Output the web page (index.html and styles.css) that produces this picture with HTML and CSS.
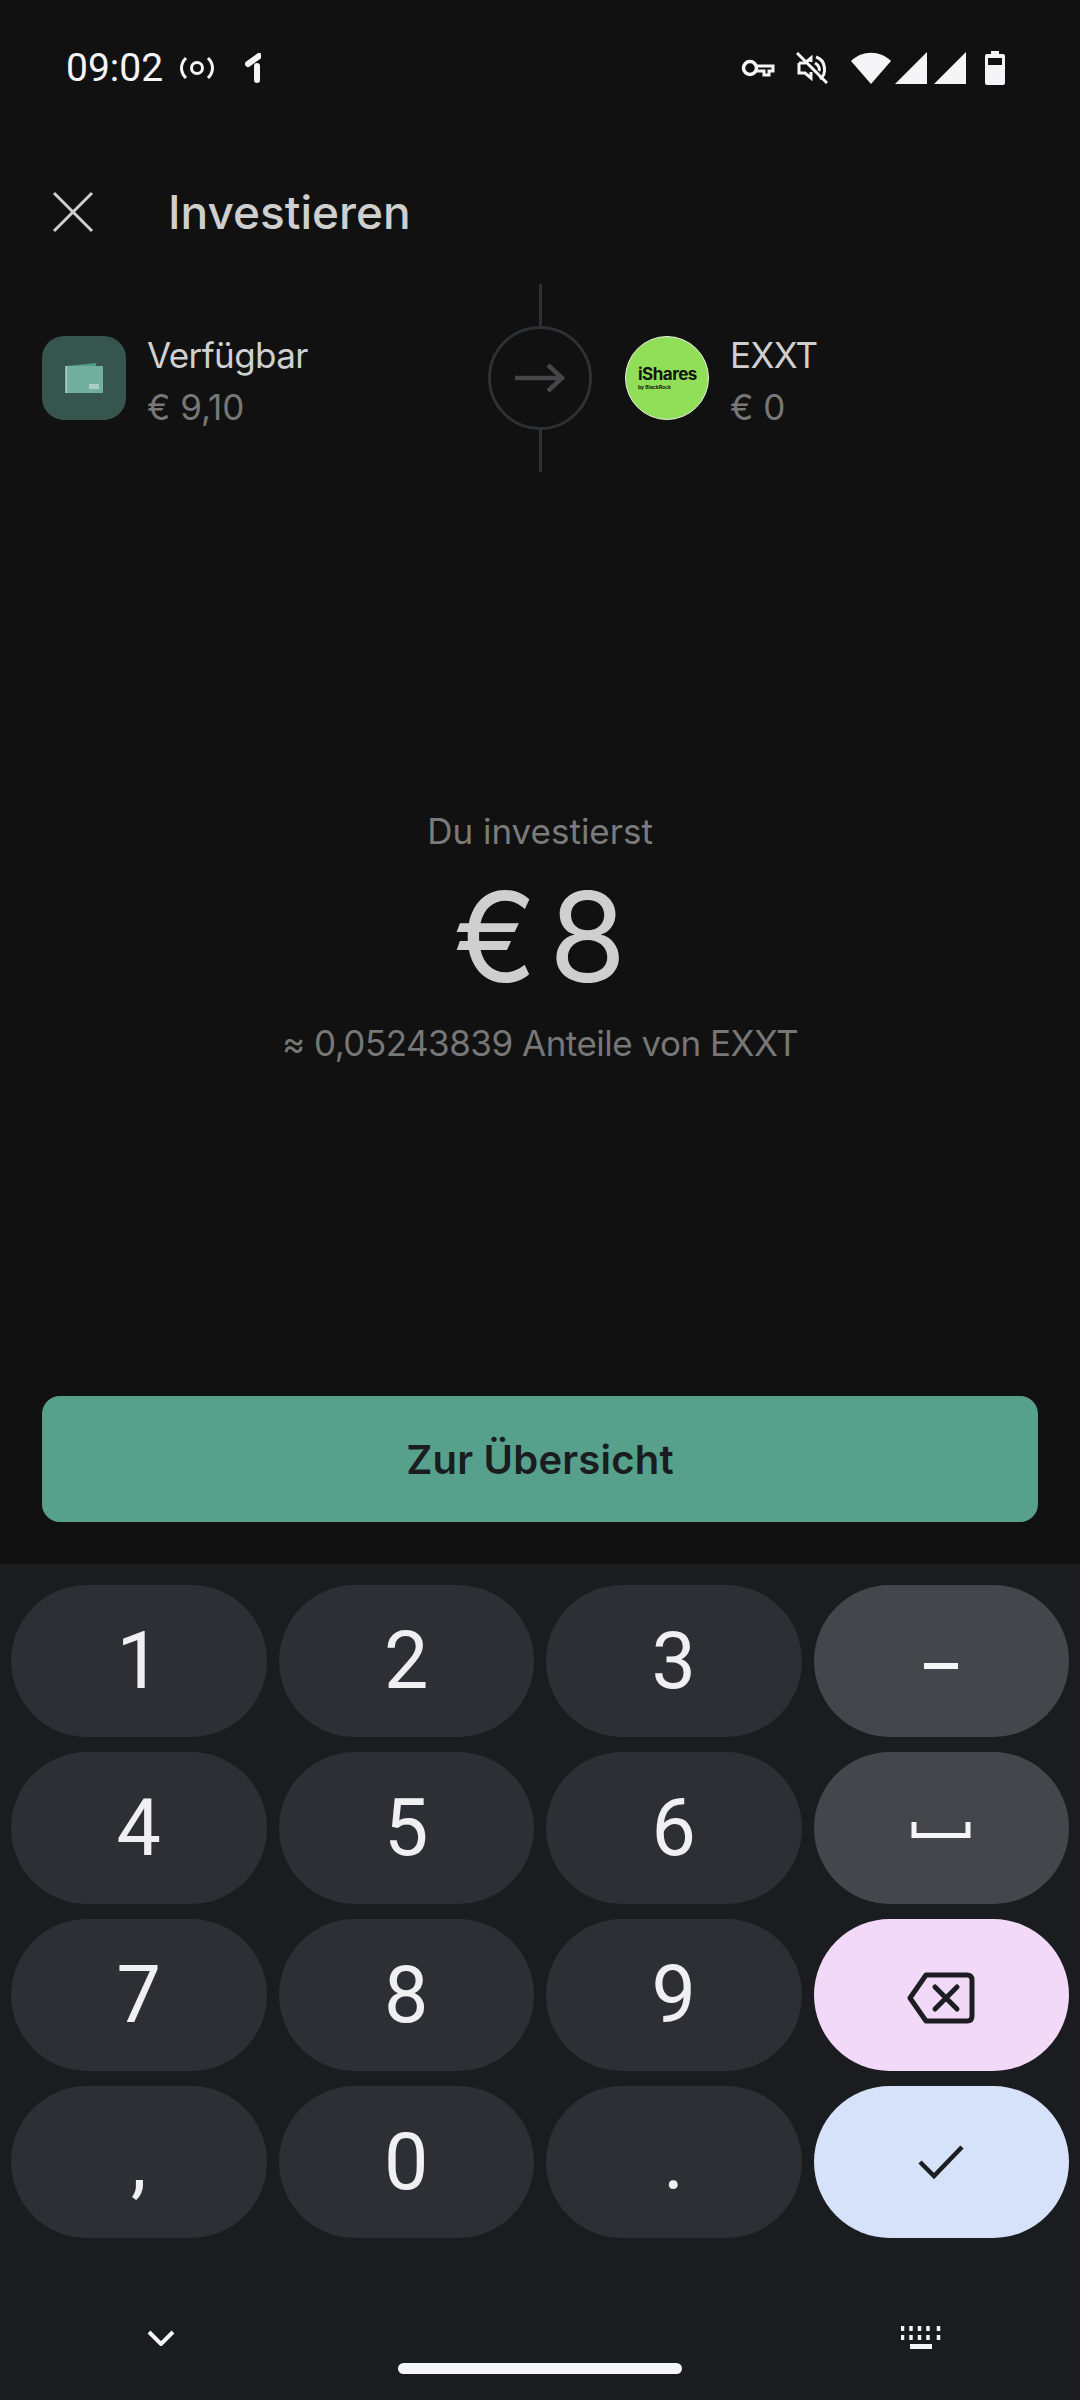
FILE: index.html
```html
<!DOCTYPE html>
<html lang="de">

<head>
  <meta charset="UTF-8" />
  <meta name="viewport" content="width=device-width, initial-scale=1" />
  <title>Investieren</title>
  <link rel="stylesheet" href="styles.css">
</head>

<body>

  <div class="statusbar">
    <div class="status-left">
      <span class="time">09:02</span>
      <svg class="icon-cast" viewBox="0 0 34 24" width="34" height="24">
        <circle cx="17" cy="12" r="5.5" fill="none" stroke="#f5f5f7" stroke-width="3" />
        <path d="M6 2 C0 8 0 16 6 22 M28 2 C34 8 34 16 28 22" fill="none" stroke="#f5f5f7" stroke-width="3" />
      </svg>
      <svg class="icon-one" viewBox="0 0 16 30" width="16" height="30">
        <path d="M3 11 L14 3 M12 13 V27" fill="none" stroke="#f5f5f7" stroke-width="6" stroke-linecap="round" />
      </svg>
    </div>
    <div class="status-right">
      <svg viewBox="0 0 34 20" width="34" height="20" class="icon-key">
        <circle cx="9" cy="10" r="6.5" fill="none" stroke="#f5f5f7" stroke-width="3.5" />
        <path d="M15 8 H32 V13 H28 V17 H23 V13 H15" fill="none" stroke="#f5f5f7" stroke-width="3" />
      </svg>
      <svg viewBox="0 0 32 32" width="32" height="32" class="icon-mute">
        <path d="M3 11 H9 L15 6 V10 M15 20 V26 L9 21 H3 V11" fill="none" stroke="#f5f5f7" stroke-width="3" />
        <path d="M20 5 C30 8 31 22 24 27 M19 11 C23 13 24 17 23 19" fill="none" stroke="#f5f5f7" stroke-width="3" />
        <path d="M1 1 L31 31" stroke="#f5f5f7" stroke-width="3" />
      </svg>
      <svg viewBox="0 0 40 32" width="40" height="32" class="icon-wifi">
        <path d="M0 9 C11 -2 29 -2 40 9 L20 32 Z" fill="#f5f5f7" />
      </svg>
      <svg viewBox="0 0 32 32" width="32" height="32" class="icon-signal">
        <path d="M32 0 V32 H0 Z" fill="#f5f5f7" />
      </svg>
      <svg viewBox="0 0 32 32" width="32" height="32" class="icon-signal">
        <path d="M32 0 V32 H0 Z" fill="#f5f5f7" />
      </svg>
      <svg viewBox="0 0 20 34" width="20" height="34" class="icon-battery">
        <path d="M6 0 H14 V3 H18 Q20 3 20 5 V32 Q20 34 18 34 H2 Q0 34 0 32 V5 Q0 3 2 3 H6 Z M3 7 V14 H17 V7 Z" fill="#f5f5f7" fill-rule="evenodd" />
      </svg>
    </div>
  </div>

  <div class="main">
    <div class="header">
      <svg class="close" viewBox="0 0 42 42" width="42" height="42">
        <path d="M2 2 L40 40 M40 2 L2 40" stroke="#cfcfcf" stroke-width="3" />
      </svg>
      <h1 class="title">Investieren</h1>
    </div>

    <div class="transfer">
      <div class="account">
        <div class="wallet">
          <svg viewBox="0 0 38 30" width="38" height="30">
            <path d="M1 3 L31 0 V6 H1 Z" fill="#4f9a85" />
            <rect x="1" y="3" width="37" height="27" fill="#72b09e" />
            <path d="M1 3 V30" stroke="#e6f2ee" stroke-width="1" />
            <path d="M24 21 H34 V26 H24 Z" fill="#cfe5de" opacity="0.6" />
          </svg>
        </div>
        <div class="account-text">
          <div class="account-name">Verfügbar</div>
          <div class="account-value">€ 9,10</div>
        </div>
      </div>

      <div class="connector">
        <div class="line"></div>
        <div class="ring">
          <svg viewBox="0 0 50 32" width="50" height="32">
            <path d="M0 16 H47 M33 3 L47 16 L33 29" fill="none" stroke="#45464a" stroke-width="4.5" />
          </svg>
        </div>
        <div class="line"></div>
      </div>

      <div class="account account-target">
        <div class="logo">
          <span class="logo-name">iShares</span>
          <span class="logo-by">by BlackRock</span>
        </div>
        <div class="account-text">
          <div class="account-name">EXXT</div>
          <div class="account-value">€ 0</div>
        </div>
      </div>
    </div>

    <div class="hero">
      <div class="hero-label">Du investierst</div>
      <div class="hero-amount">€ 8</div>
      <div class="hero-sub">≈ 0,05243839 Anteile von EXXT</div>
    </div>

    <button class="cta">Zur Übersicht</button>
  </div>

  <div class="keyboard">
    <div class="keys">
      <button class="key">1</button>
      <button class="key">2</button>
      <button class="key">3</button>
      <button class="key key-fn">
        <svg class="icon-dash" viewBox="0 0 34 6" width="34" height="6"><rect width="34" height="6" fill="#f5f5f7" /></svg>
      </button>

      <button class="key">4</button>
      <button class="key">5</button>
      <button class="key">6</button>
      <button class="key key-fn">
        <svg class="icon-space" viewBox="0 0 60 16" width="60" height="16">
          <path d="M3 0 V13.500 H57 V0" fill="none" stroke="#f5f5f7" stroke-width="5" />
        </svg>
      </button>

      <button class="key">7</button>
      <button class="key">8</button>
      <button class="key">9</button>
      <button class="key key-delete">
        <svg class="icon-delete" viewBox="0 0 68 52" width="68" height="52">
          <path d="M19 3 H60 Q65 3 65 8 V44 Q65 49 60 49 H19 L3 26 Z" fill="none" stroke="#1d1e22" stroke-width="5" stroke-linejoin="round" />
          <path d="M28 15 L50 37 M50 15 L28 37" stroke="#1d1e22" stroke-width="5" stroke-linecap="round" />
        </svg>
      </button>

      <button class="key">,</button>
      <button class="key">0</button>
      <button class="key">.</button>
      <button class="key key-done">
        <svg viewBox="0 0 46 36" width="46" height="36">
          <path d="M2 18 L16 32 L44 3" fill="none" stroke="#1d1e22" stroke-width="4.5" />
        </svg>
      </button>
    </div>

    <div class="keyboard-foot">
      <svg viewBox="0 0 28 16" width="28" height="16">
        <path d="M2 2 L14 14 L26 2" fill="none" stroke="#f5f5f7" stroke-width="4" />
      </svg>
      <svg viewBox="0 0 40 24" width="40" height="24">
        <path d="M1.500 0 V5 M10 0 V5 M18.500 0 V5 M27 0 V5 M37.500 0 V5 M1.500 9 V14 M10 9 V14 M18.500 9 V14 M27 9 V14 M37.500 9 V14" stroke="#f5f5f7" stroke-width="3.500" />
        <rect x="9" y="18" width="22" height="5" fill="#f5f5f7" />
      </svg>
    </div>
    <div class="home-bar"></div>
  </div>

</body>

</html>
```

FILE: styles.css
```css
/* Page */
body {
  margin: 0;
  width: 1080px;
  height: 2400px;
  display: flex;
  flex-direction: column;
  background: #111111;
  font-family: Inter, 'Liberation Sans', sans-serif;
  overflow: hidden;
}

svg {
  display: block;
}

/* Status bar */
.statusbar {
  height: 134px;
  flex: none;
  display: flex;
  justify-content: space-between;
  align-items: center;
  padding: 2px 75px 0 66px;
  box-sizing: border-box;
}

.status-left,
.status-right {
  display: flex;
  align-items: center;
}

.time {
  color: #f5f5f7;
  font-family: Roboto, sans-serif;
  font-size: 39px;
  width: 96px;
}

.icon-cast {
  margin-left: 18px;
}

.icon-one {
  margin-left: 31px;
}

.icon-key {
  margin-right: 21px;
}

.icon-mute {
  margin-right: 23px;
}

.icon-wifi {
  margin-right: 4px;
}

.icon-signal {
  margin-right: 7px;
}

.icon-battery {
  margin-left: 12px;
}

/* Main content */
.main {
  flex: 1;
  display: flex;
  flex-direction: column;
  padding: 0 42px 42px;
}

.header {
  height: 150px;
  flex: none;
  display: flex;
  align-items: center;
  padding: 6px 0 0 10px;
  box-sizing: border-box;
}

.title {
  margin: 0 0 0 74px;
  color: #cfcfcf;
  font-size: 46px;
  font-weight: 500;
  line-height: 56px;
}

.transfer {
  display: grid;
  grid-template-columns: 1fr 104px 1fr;
  align-items: center;
}

.account {
  display: flex;
  align-items: center;
}

.account-target {
  padding-left: 33px;
}

.wallet {
  width: 84px;
  height: 84px;
  border-radius: 22px;
  background: #36564d;
  display: flex;
  align-items: center;
  justify-content: center;
}

.logo {
  width: 84px;
  height: 84px;
  border-radius: 50%;
  box-sizing: border-box;
  border: 1px solid #e8f3e0;
  background: #91df59;
  color: #10140c;
  display: flex;
  flex-direction: column;
  justify-content: center;
  padding-left: 12px;
}

.logo-name {
  font-size: 17px;
  font-weight: 700;
  line-height: 18px;
  letter-spacing: -0.5px;
}

.logo-by {
  font-size: 5px;
  font-weight: 700;
  line-height: 8px;
}

.account-text {
  margin-left: 21px;
  padding-top: 5px;
}

.account-name {
  color: #d0d0d0;
  font-size: 35px;
  line-height: 52px;
  letter-spacing: -0.6px;
}

.account-value {
  color: #777777;
  font-size: 35px;
  line-height: 52px;
}

.connector {
  display: flex;
  flex-direction: column;
  align-items: center;
}

.line {
  width: 3px;
  height: 42px;
  background: #2f3036;
}

.ring {
  width: 104px;
  height: 104px;
  box-sizing: border-box;
  border: 3px solid #2f3036;
  border-radius: 50%;
  display: flex;
  align-items: center;
  justify-content: center;
}

.hero {
  margin-top: 337px;
  text-align: center;
}

.hero-label {
  color: #7b7b7b;
  font-size: 35px;
  line-height: 44px;
}

.hero-amount {
  margin-top: 19px;
  color: #cfcfcf;
  font-size: 125px;
  line-height: 130px;
  word-spacing: -23px;
}

.hero-sub {
  margin-top: 19px;
  color: #777777;
  font-size: 35px;
  line-height: 44px;
  letter-spacing: -0.5px;
}

.cta {
  margin-top: auto;
  height: 126px;
  flex: none;
  border: none;
  border-radius: 18px;
  background: #57a08c;
  color: #1a1c20;
  font-family: Inter, sans-serif;
  font-size: 40px;
  font-weight: 600;
  letter-spacing: 0.2px;
  cursor: pointer;
}

/* Keyboard */
.keyboard {
  height: 836px;
  flex: none;
  box-sizing: border-box;
  background: #1b1c20;
  padding-top: 21px;
}

.keys {
  display: grid;
  grid-template-columns: repeat(4, 1fr);
  grid-auto-rows: 152px;
  gap: 15px 12px;
  padding: 0 11px;
}

.key {
  border: none;
  border-radius: 76px;
  background: #2e2f34;
  color: #f0f0f2;
  font-family: Roboto, sans-serif;
  font-size: 79px;
  padding: 0;
  display: flex;
  align-items: center;
  justify-content: center;
}

.key-fn {
  background: #45464b;
}

.key-delete {
  background: #f3d9f8;
}

.key-done {
  background: #d5e2f9;
}

.icon-dash {
  margin-top: 10px;
}

.icon-space {
  margin-top: 4px;
}

.icon-delete {
  margin-top: 6px;
}

.keyboard-foot {
  display: flex;
  justify-content: space-between;
  align-items: center;
  margin-top: 88px;
  padding: 0 139px 0 147px;
  height: 24px;
}

.home-bar {
  width: 284px;
  height: 11px;
  margin: 13px auto 0;
  border-radius: 6px;
  background: #f5f5f7;
}
```
